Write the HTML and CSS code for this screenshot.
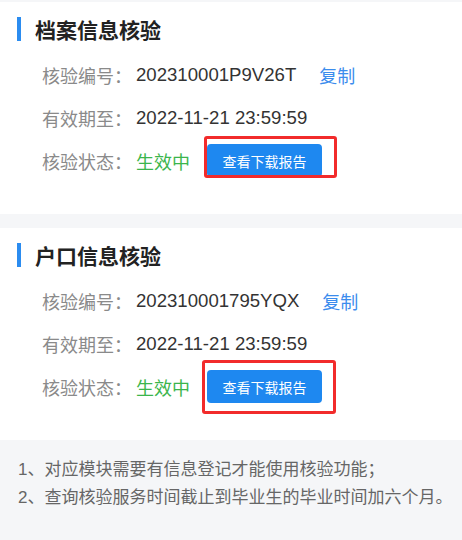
FILE: index.html
```html
<!DOCTYPE html>
<html lang="zh-CN">
<head>
    <meta charset="UTF-8">
    <meta name="viewport" content="width=device-width, initial-scale=1.0">
    <title>信息核验</title>
    <link rel="stylesheet" href="styles.css">
</head>
<body>
<div class="page">
    <div class="card">
        <div class="card-title">档案信息核验</div>
        <div class="row">
            <span class="label">核验编号：</span>
            <span class="value">202310001P9V26T</span>
            <a class="copy" href="#">复制</a>
        </div>
        <div class="row">
            <span class="label">有效期至：</span>
            <span class="value">2022-11-21 23:59:59</span>
        </div>
        <div class="row">
            <span class="label">核验状态：</span>
            <span class="status">生效中</span>
            <span class="btn-wrap">
                <button class="report-btn">查看下载报告</button>
                <span class="mark mark-one"></span>
            </span>
        </div>
    </div>

    <div class="card">
        <div class="card-title">户口信息核验</div>
        <div class="row">
            <span class="label">核验编号：</span>
            <span class="value">202310001795YQX</span>
            <a class="copy" href="#">复制</a>
        </div>
        <div class="row">
            <span class="label">有效期至：</span>
            <span class="value">2022-11-21 23:59:59</span>
        </div>
        <div class="row">
            <span class="label">核验状态：</span>
            <span class="status">生效中</span>
            <span class="btn-wrap">
                <button class="report-btn">查看下载报告</button>
                <span class="mark mark-two"></span>
            </span>
        </div>
    </div>

    <div class="notes">
        <p>1、对应模块需要有信息登记才能使用核验功能；</p>
        <p>2、查询核验服务时间截止到毕业生的毕业时间加六个月。</p>
    </div>
</div>
</body>
</html>
```

FILE: styles.css
```css
body {
    margin: 0;
    background-color: #f5f6f8;
    font-family: "Liberation Sans", "Noto Sans CJK SC", sans-serif;
}

.page {
    display: flex;
    flex-direction: column;
    gap: 14px;
    padding-top: 2px;
}

.card {
    background-color: #fff;
    padding: 15px 0 32px;
}

.card-title {
    display: flex;
    align-items: center;
    height: 24px;
    margin-bottom: 12px;
    margin-left: 17px;
    padding-left: 14px;
    border-left: 4px solid #2b8cf0;
    font-size: 21px;
    font-weight: bold;
    color: #222;
}

.row {
    display: flex;
    align-items: center;
    height: 43px;
    padding-left: 42px;
    font-size: 18px;
}

.label {
    color: #8a8a8a;
    margin-right: 4px;
}

.value {
    color: #333;
    font-size: 18.6px;
}

.copy {
    margin-left: 23px;
    color: #3b8ced;
    text-decoration: none;
}

.status {
    color: #3cb54c;
}

.btn-wrap {
    position: relative;
    display: flex;
    margin-left: 17px;
}

.report-btn {
    width: 115px;
    height: 33px;
    border: none;
    border-radius: 4px;
    background-color: #1e88f0;
    color: #fff;
    font-family: "Liberation Sans", "Noto Sans CJK SC", sans-serif;
    font-size: 14px;
    cursor: pointer;
}

/* red annotation boxes drawn over the buttons */
.mark {
    position: absolute;
    border: 3px solid #f22b2b;
    border-radius: 3px;
    pointer-events: none;
}

.mark-one {
    left: -3px;
    top: -8px;
    width: 127px;
    height: 36px;
}

.mark-two {
    left: -5px;
    top: -10px;
    width: 128px;
    height: 48px;
}

.notes {
    padding: 2px 0 30px 18px;
    font-size: 17px;
    line-height: 28px;
    color: #666;
    white-space: nowrap;
}

.notes p {
    margin: 0;
}
```
